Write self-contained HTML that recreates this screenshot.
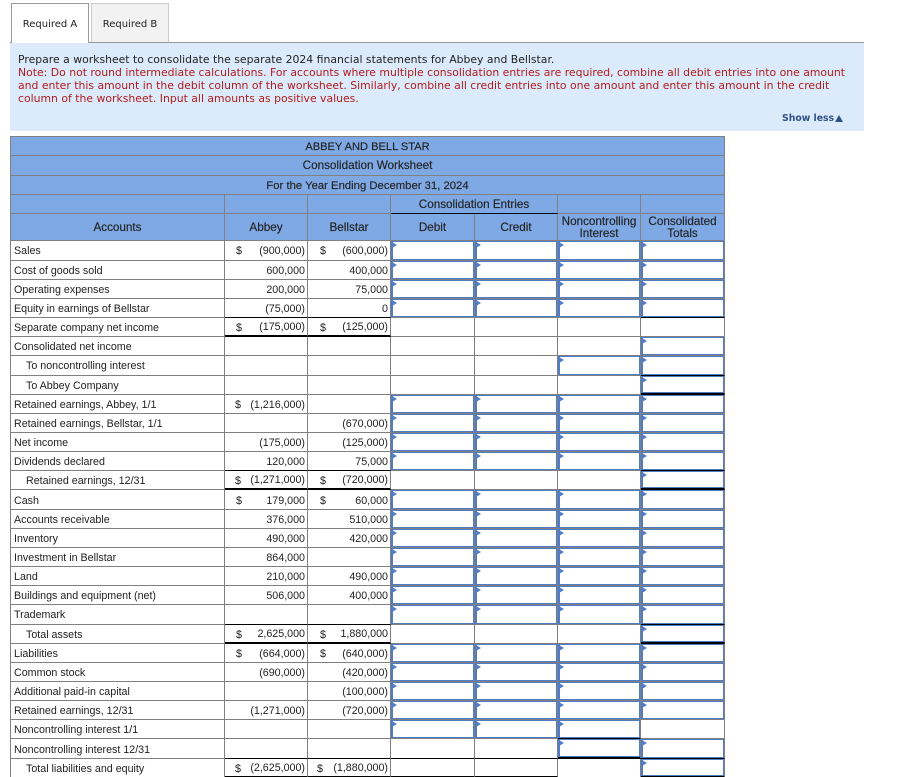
<!DOCTYPE html>
<html>
<head>
<meta charset="utf-8">
<style>
html,body{margin:0;padding:0;background:#fff;width:900px;height:777px;overflow:hidden}
body{position:relative;font-family:"Liberation Sans",sans-serif}
.tab{position:absolute;top:3px;height:39px;box-sizing:border-box;font:10px/41px "DejaVu Sans",sans-serif;text-align:center;color:#222}
#ta{left:11px;width:78px;height:40px;border:1px solid #999;border-bottom:0;background:#fff;z-index:2}
#tb{left:91px;width:78px;border:1px solid #ccc;border-bottom:0;background:#f2f2f2}
#panel{position:absolute;left:10px;top:42px;width:854px;height:89px;box-sizing:border-box;border-top:1px solid #999;background:#dcebfb;font:10.85px/13px "DejaVu Sans",sans-serif;color:#222;padding:10px 0 0 8px}
#panel div{white-space:nowrap}
#panel .r{color:#b31b1b}
#more{position:absolute;left:772px;top:69px;font:bold 9.3px/13px "DejaVu Sans",sans-serif;color:#2f5188;white-space:nowrap}
#more i{position:absolute;left:53px;top:3px;width:0;height:0;border-left:4.5px solid transparent;border-right:4.5px solid transparent;border-bottom:7px solid #2f5188}
table{position:absolute;left:10px;top:136px;width:715px;table-layout:fixed;border-collapse:separate;border-spacing:0;border-top:1px solid #808080;border-left:1px solid #808080;font-size:10.7px;line-height:12px;color:#222}
td{padding:1px 0 0;border-right:1px solid #808080;border-bottom:1px solid #808080;position:relative;white-space:nowrap;overflow:visible;box-sizing:border-box}
tr{height:19px}
tr.a{height:20px}
tr.p td{padding-top:2px}
.h td{background:#7fa9e5;text-align:center;font-size:11.7px;-webkit-text-stroke:.15px #222}
.l{padding-left:3px}
.l2{padding-left:15px}
.m{text-align:right;padding-right:2px}
.m s{position:absolute;left:11px;top:4px;text-decoration:none}
.p .m s{top:5px}
.m2 s{left:10px}
.n s{left:12px}
.i:before{content:"";position:absolute;left:0;top:0;right:0;bottom:0;border:1px solid #4f7cc2;border-left-width:2px;border-right-width:1px}
.i:after{content:"";position:absolute;left:1px;top:1px;width:0;height:0;border-top:3px solid transparent;border-bottom:3px solid transparent;border-left:5px solid #4f7fcb}
td.k{border-bottom:1px solid #000}
td.K{border-bottom:2px solid #000}
</style>
</head>
<body>
<div class="tab" id="ta">Required A</div>
<div class="tab" id="tb">Required B</div>
<div id="panel">
<div>Prepare a worksheet to consolidate the separate 2024 financial statements for Abbey and Bellstar.</div>
<div class="r">Note: Do not round intermediate calculations. For accounts where multiple consolidation entries are required, combine all debit entries into one amount</div>
<div class="r">and enter this amount in the debit column of the worksheet. Similarly, combine all credit entries into one amount and enter this amount in the credit</div>
<div class="r">column of the worksheet. Input all amounts as positive values.</div>
<div id="more">Show less<i></i></div>
</div>
<table>
<colgroup><col style="width:214px"><col style="width:83px"><col style="width:83px"><col style="width:84px"><col style="width:83px"><col style="width:83px"><col style="width:84px"></colgroup>
<tr class="h" style="height:19px"><td colspan="7" style="font-size:11.1px">ABBEY AND BELL STAR</td></tr>
<tr class="h a"><td colspan="7">Consolidation Worksheet</td></tr>
<tr class="h"><td colspan="7" style="font-size:11.3px">For the Year Ending December 31, 2024</td></tr>
<tr class="h"><td></td><td></td><td></td><td colspan="2" class="k">Consolidation Entries</td><td></td><td></td></tr>
<tr class="h" style="height:27px"><td>Accounts</td><td>Abbey</td><td>Bellstar</td><td>Debit</td><td>Credit</td><td>Noncontrolling<br>Interest</td><td>Consolidated<br>Totals</td></tr>

<tr class="a"><td class="l">Sales</td><td class="m"><s>$</s>(900,000)</td><td class="m n"><s>$</s>(600,000)</td><td class="i"></td><td class="i"></td><td class="i"></td><td class="i"></td></tr>
<tr><td class="l">Cost of goods sold</td><td class="m">600,000</td><td class="m">400,000</td><td class="i"></td><td class="i"></td><td class="i"></td><td class="i"></td></tr>
<tr><td class="l">Operating expenses</td><td class="m">200,000</td><td class="m">75,000</td><td class="i"></td><td class="i"></td><td class="i"></td><td class="i"></td></tr>
<tr><td class="l">Equity in earnings of Bellstar</td><td class="m k">(75,000)</td><td class="m k">0</td><td class="i"></td><td class="i"></td><td class="i"></td><td class="i k"></td></tr>
<tr><td class="l">Separate company net income</td><td class="m K"><s>$</s>(175,000)</td><td class="m n K"><s>$</s>(125,000)</td><td></td><td></td><td></td><td></td></tr>
<tr><td class="l">Consolidated net income</td><td></td><td></td><td></td><td></td><td></td><td class="i"></td></tr>
<tr class="a"><td class="l2">To noncontrolling interest</td><td></td><td></td><td></td><td></td><td class="i"></td><td class="i k"></td></tr>
<tr><td class="l2">To Abbey Company</td><td></td><td></td><td></td><td></td><td></td><td class="i K"></td></tr>
<tr><td class="l">Retained earnings, Abbey, 1/1</td><td class="m m2"><s>$</s>(1,216,000)</td><td></td><td class="i"></td><td class="i"></td><td class="i"></td><td class="i"></td></tr>
<tr><td class="l">Retained earnings, Bellstar, 1/1</td><td></td><td class="m">(670,000)</td><td class="i"></td><td class="i"></td><td class="i"></td><td class="i"></td></tr>
<tr><td class="l">Net income</td><td class="m">(175,000)</td><td class="m">(125,000)</td><td class="i"></td><td class="i"></td><td class="i"></td><td class="i"></td></tr>
<tr><td class="l">Dividends declared</td><td class="m k">120,000</td><td class="m k">75,000</td><td class="i"></td><td class="i"></td><td class="i"></td><td class="i k"></td></tr>
<tr><td class="l2">Retained earnings, 12/31</td><td class="m m2 K"><s>$</s>(1,271,000)</td><td class="m n K"><s>$</s>(720,000)</td><td></td><td></td><td></td><td class="i K"></td></tr>
<tr class="a p"><td class="l">Cash</td><td class="m"><s>$</s>179,000</td><td class="m n"><s>$</s>60,000</td><td class="i"></td><td class="i"></td><td class="i"></td><td class="i"></td></tr>
<tr><td class="l">Accounts receivable</td><td class="m">376,000</td><td class="m">510,000</td><td class="i"></td><td class="i"></td><td class="i"></td><td class="i"></td></tr>
<tr><td class="l">Inventory</td><td class="m">490,000</td><td class="m">420,000</td><td class="i"></td><td class="i"></td><td class="i"></td><td class="i"></td></tr>
<tr><td class="l">Investment in Bellstar</td><td class="m">864,000</td><td></td><td class="i"></td><td class="i"></td><td class="i"></td><td class="i"></td></tr>
<tr><td class="l">Land</td><td class="m">210,000</td><td class="m">490,000</td><td class="i"></td><td class="i"></td><td class="i"></td><td class="i"></td></tr>
<tr><td class="l">Buildings and equipment (net)</td><td class="m">506,000</td><td class="m">400,000</td><td class="i"></td><td class="i"></td><td class="i"></td><td class="i"></td></tr>
<tr class="a"><td class="l">Trademark</td><td class="k"></td><td class="k"></td><td class="i"></td><td class="i"></td><td class="i"></td><td class="i k"></td></tr>
<tr><td class="l2">Total assets</td><td class="m K"><s>$</s>2,625,000</td><td class="m n K"><s>$</s>1,880,000</td><td></td><td></td><td></td><td class="i K"></td></tr>
<tr><td class="l">Liabilities</td><td class="m"><s>$</s>(664,000)</td><td class="m n"><s>$</s>(640,000)</td><td class="i"></td><td class="i"></td><td class="i"></td><td class="i"></td></tr>
<tr><td class="l">Common stock</td><td class="m">(690,000)</td><td class="m">(420,000)</td><td class="i"></td><td class="i"></td><td class="i"></td><td class="i"></td></tr>
<tr><td class="l">Additional paid-in capital</td><td></td><td class="m">(100,000)</td><td class="i"></td><td class="i"></td><td class="i"></td><td class="i"></td></tr>
<tr><td class="l">Retained earnings, 12/31</td><td class="m">(1,271,000)</td><td class="m">(720,000)</td><td class="i"></td><td class="i"></td><td class="i"></td><td class="i"></td></tr>
<tr><td class="l">Noncontrolling interest 1/1</td><td></td><td></td><td class="i"></td><td class="i"></td><td class="i k"></td><td></td></tr>
<tr class="a p"><td class="l">Noncontrolling interest 12/31</td><td class="k"></td><td class="k"></td><td class="k"></td><td class="k"></td><td class="i K"></td><td class="i k"></td></tr>
<tr style="height:19px"><td class="l2">Total liabilities and equity</td><td class="m m2 K"><s>$</s>(2,625,000)</td><td class="m K"><s style="left:9px">$</s>(1,880,000)</td><td class="K"></td><td class="K"></td><td></td><td class="i K"></td></tr>
</table>
</body>
</html>
